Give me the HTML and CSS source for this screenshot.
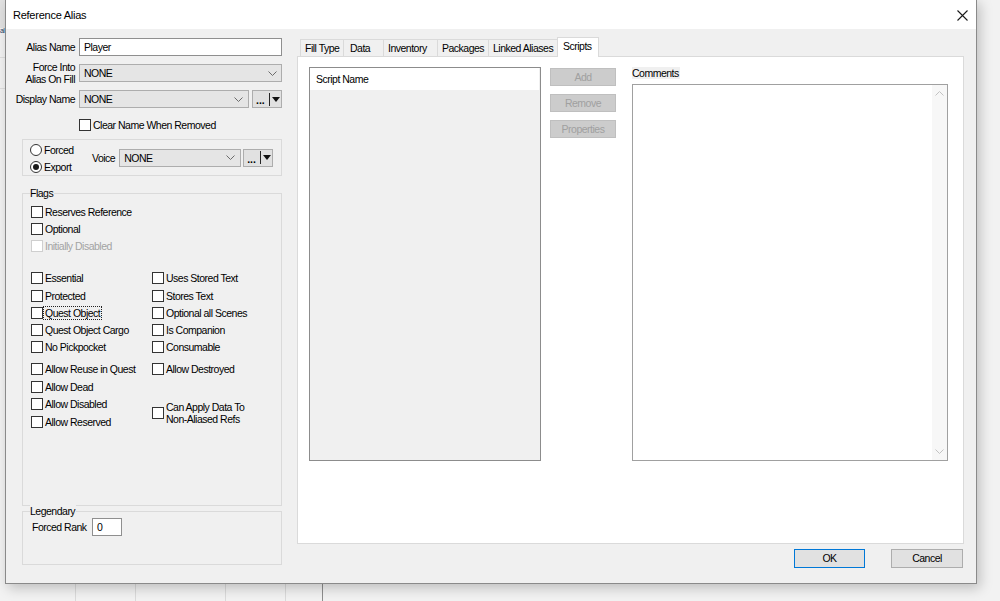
FILE: index.html
```html
<!DOCTYPE html>
<html>
<head>
<meta charset="utf-8">
<title>Reference Alias</title>
<link rel="stylesheet" href="styles.css">
</head>
<body>
<div class="desktop">
  <div class="bg-corner"></div>
  <span class="bg-text">al</span>
  <div class="bg-hline h1"></div>
  <div class="bg-hline h2"></div>
  <div class="bg-vline v1"></div>
  <div class="bg-vline v2"></div>
  <div class="bg-vline v3"></div>
  <div class="bg-vline v4"></div>
  <div class="bg-vline v5"></div>

  <div class="window">
    <div class="titlebar">
      <span class="title">Reference Alias</span>
      <svg class="close" width="11" height="11" viewBox="0 0 11 11"><path d="M0.5 0.5 L10.5 10.5 M10.5 0.5 L0.5 10.5" stroke="#1a1a1a" stroke-width="1.1" fill="none"/></svg>
    </div>
    <div class="client">
      <div class="left">
        <div class="frow r-alias">
          <span class="lbl">Alias Name</span>
          <div class="textbox w-alias">Player</div>
        </div>
        <div class="frow r-next">
          <span class="lbl two">Force Into<br>Alias On Fill</span>
          <div class="combo w-force"><span>NONE</span><svg class="chev" width="9" height="5" viewBox="0 0 9 5"><path d="M0.5 0.5 L4.5 4.5 L8.5 0.5" stroke="#6b6b6b" fill="none"/></svg></div>
        </div>
        <div class="frow r-next">
          <span class="lbl">Display Name</span>
          <div class="combo w-display"><span>NONE</span><svg class="chev" width="9" height="5" viewBox="0 0 9 5"><path d="M0.5 0.5 L4.5 4.5 L8.5 0.5" stroke="#6b6b6b" fill="none"/></svg></div>
          <div class="dots w-dots1"><span class="dd">...</span><span class="sep"></span><svg width="8" height="5" viewBox="0 0 8 5"><path d="M0 0 H8 L4 5 Z" fill="#111"/></svg></div>
        </div>
        <div class="cbrow r-clear"><span class="cb"></span><span>Clear Name When Removed</span></div>

        <div class="group g-voice">
          <div class="radios">
            <div class="rrow"><span class="radio"></span><span>Forced</span></div>
            <div class="rrow"><span class="radio on"></span><span>Export</span></div>
          </div>
          <span class="voice-lbl">Voice</span>
          <div class="combo w-voice"><span>NONE</span><svg class="chev" width="9" height="5" viewBox="0 0 9 5"><path d="M0.5 0.5 L4.5 4.5 L8.5 0.5" stroke="#6b6b6b" fill="none"/></svg></div>
          <div class="dots w-dots2"><span class="dd">...</span><span class="sep"></span><svg width="8" height="5" viewBox="0 0 8 5"><path d="M0 0 H8 L4 5 Z" fill="#111"/></svg></div>
        </div>

        <div class="group g-flags">
          <span class="legend">Flags</span>
          <div class="fcol c1">
            <div class="cbrow"><span class="cb"></span><span>Reserves Reference</span></div>
            <div class="cbrow"><span class="cb"></span><span>Optional</span></div>
            <div class="cbrow off"><span class="cb"></span><span>Initially Disabled</span></div>
            <div class="sp15"></div>
            <div class="cbrow h18"><span class="cb"></span><span>Essential</span></div>
            <div class="cbrow"><span class="cb"></span><span>Protected</span></div>
            <div class="cbrow"><span class="cb"></span><span class="focus">Quest Object</span></div>
            <div class="cbrow"><span class="cb"></span><span>Quest Object Cargo</span></div>
            <div class="cbrow h18"><span class="cb"></span><span>No Pickpocket</span></div>
            <div class="sp4"></div>
            <div class="cbrow h18"><span class="cb"></span><span>Allow Reuse in Quest</span></div>
            <div class="cbrow"><span class="cb"></span><span>Allow Dead</span></div>
            <div class="cbrow h18"><span class="cb"></span><span>Allow Disabled</span></div>
            <div class="cbrow"><span class="cb"></span><span>Allow Reserved</span></div>
          </div>
          <div class="fcol c2">
            <div class="sp66"></div>
            <div class="cbrow h18"><span class="cb"></span><span>Uses Stored Text</span></div>
            <div class="cbrow"><span class="cb"></span><span>Stores Text</span></div>
            <div class="cbrow"><span class="cb"></span><span>Optional all Scenes</span></div>
            <div class="cbrow"><span class="cb"></span><span>Is Companion</span></div>
            <div class="cbrow h18"><span class="cb"></span><span>Consumable</span></div>
            <div class="sp4"></div>
            <div class="cbrow h18"><span class="cb"></span><span>Allow Destroyed</span></div>
            <div class="sp17"></div>
            <div class="cbrow two"><span class="cb"></span><span>Can Apply Data To<br>Non-Aliased Refs</span></div>
          </div>
        </div>

        <div class="group g-legend">
          <span class="legend">Legendary</span>
          <div class="frow r-rank">
            <span class="rank-lbl">Forced Rank</span>
            <div class="textbox w-rank">0</div>
          </div>
        </div>
      </div>

      <div class="right">
        <div class="tabstrip">
          <div class="tab t1">Fill Type</div>
          <div class="tab t2">Data</div>
          <div class="tab t3">Inventory</div>
          <div class="tab t4">Packages</div>
          <div class="tab t5">Linked Aliases</div>
          <div class="tab t6 on">Scripts</div>
        </div>
        <div class="panel">
          <div class="list">
            <div class="lhead">Script Name</div>
          </div>
          <div class="btns">
            <div class="dbtn">Add</div>
            <div class="dbtn">Remove</div>
            <div class="dbtn">Properties</div>
          </div>
          <div class="comments">
            <span class="c-lbl">Comments</span>
            <div class="c-area">
              <div class="sbar">
                <svg width="9" height="5" viewBox="0 0 9 5"><path d="M0.5 4.5 L4.5 0.5 L8.5 4.5" stroke="#c2c2c2" fill="none"/></svg>
                <svg width="9" height="5" viewBox="0 0 9 5"><path d="M0.5 0.5 L4.5 4.5 L8.5 0.5" stroke="#c2c2c2" fill="none"/></svg>
              </div>
            </div>
          </div>
        </div>
        <div class="footer">
          <div class="btn ok">OK</div>
          <div class="btn cancel">Cancel</div>
        </div>
      </div>
    </div>
  </div>
</div>
</body>
</html>
```

FILE: styles.css
```css
* { box-sizing: border-box; }
html, body { margin: 0; padding: 0; }
body {
  width: 1000px;
  height: 601px;
  overflow: hidden;
  font-family: "Liberation Sans", Arial, sans-serif;
  font-size: 10.5px;
  letter-spacing: -0.5px;
  color: #000;
  background: #f2f2f2;
}

/* desktop background (other app behind the dialog) */
.desktop { position: relative; width: 1000px; height: 601px; background: #f2f2f2; }
.bg-corner { position: absolute; left: 0; top: 0; width: 6px; height: 28px; background: #e2e2e2; }
.bg-text { position: absolute; left: 0; top: 27px; font-size: 7px; letter-spacing: -0.6px; line-height: 8px; color: #1f3d6b; }
.bg-hline { position: absolute; left: 0; width: 6px; height: 1px; background: #dedede; }
.bg-hline.h1 { top: 57px; }
.bg-hline.h2 { top: 88px; }
.bg-vline { position: absolute; top: 584px; width: 1px; height: 17px; background: #dadada; }
.bg-vline.v1 { left: 75px; }
.bg-vline.v2 { left: 135px; }
.bg-vline.v3 { left: 225px; }
.bg-vline.v4 { left: 285px; }
.bg-vline.v5 { left: 322px; background: #8e8e8e; }

/* window */
.window {
  position: absolute;
  left: 5px;
  top: -1px;
  width: 972px;
  height: 585px;
  border: 1px solid #8a8a8a;
  background: #f0f0f0;
  box-shadow: 3px 4px 12px rgba(0, 0, 0, 0.22);
  display: flex;
  flex-direction: column;
}
.titlebar {
  flex: none;
  height: 29px;
  background: #fff;
  display: flex;
  align-items: center;
  padding-left: 7px;
  padding-right: 8px;
}
.title { font-size: 11px; letter-spacing: -0.25px; padding-top: 1px; }
.close { margin-left: auto; margin-top: 1px; }

.client { flex: 1; display: flex; }

/* left column */
.left { width: 276px; flex: none; display: flex; flex-direction: column; }
.frow { display: flex; align-items: center; height: 18px; }
.r-alias { margin-top: 9px; }
.r-next { margin-top: 8px; }
.lbl { width: 69px; flex: none; text-align: right; margin-right: 4px; white-space: nowrap; }
.lbl.two { line-height: 12px; }

.textbox {
  height: 18px;
  background: #fff;
  border: 1px solid #8f8f8f;
  padding-left: 4px;
  line-height: 16px;
}
.w-alias { width: 203px; }

.combo {
  height: 18px;
  background: #e5e5e5;
  border: 1px solid #adadad;
  display: flex;
  align-items: center;
  justify-content: space-between;
  padding-left: 4px;
  padding-right: 4px;
}
.w-force { width: 203px; }
.w-display { width: 170px; padding-right: 5px; }
.w-voice { width: 122px; padding-right: 5px; }

.dots {
  height: 18px;
  background: #e1e1e1;
  border: 1px solid #adadad;
  display: flex;
  align-items: center;
  padding-left: 3px;
}
.dots .dd { font-weight: bold; letter-spacing: 0; line-height: 10px; margin-top: 2px; }
.dots .sep { width: 1px; height: 13px; background: #262626; margin: 0 2px 0 4px; }
.w-dots1 { width: 30px; margin-left: 3px; }
.w-dots2 { width: 30px; margin-left: 2px; }

.cbrow { display: flex; align-items: center; height: 17px; white-space: nowrap; }
.cbrow.h18 { height: 18px; }
.cbrow.two { height: 36px; line-height: 12px; }
.cb {
  flex: none;
  width: 12px;
  height: 12px;
  border: 1px solid #333;
  background: #fff;
  margin-right: 2px;
}
.cbrow.off { color: #a3a3a3; }
.cbrow.off .cb { border-color: #cfcfcf; }
.focus { outline: 1px dotted #222; line-height: 12px; padding: 0 1px; margin-left: -1px; }
.r-clear { margin-top: 10px; height: 13px; margin-left: 73px; }

/* group boxes */
.group {
  position: relative;
  margin-left: 16px;
  width: 260px;
  border: 1px solid #dadada;
}
.legend {
  position: absolute;
  top: -7px;
  left: 7px;
  line-height: 13px;
  background: #f0f0f0;
  padding: 0 1px 0 0;
}
.g-voice { margin-top: 8px; height: 37px; display: flex; align-items: center; padding-left: 7px; }
.radios { width: 62px; flex: none; margin-top: 2px; }
.rrow { display: flex; align-items: center; height: 17px; }
.radio {
  width: 12px;
  height: 12px;
  border: 1px solid #333;
  border-radius: 50%;
  background: #fff;
  margin-right: 2px;
  display: flex;
  align-items: center;
  justify-content: center;
}
.radio.on::after {
  content: "";
  width: 6px;
  height: 6px;
  border-radius: 50%;
  background: #1a1a1a;
}
.voice-lbl { margin-right: 4px; }

.g-flags { margin-top: 17px; height: 313px; display: flex; padding: 9px 0 0 8px; }
.fcol { display: flex; flex-direction: column; }
.c1 { width: 121px; }
.sp15 { height: 15px; }
.sp4 { height: 4px; }
.sp17 { height: 17px; }
.sp66 { height: 66px; }

.g-legend { margin-top: 5px; height: 54px; padding: 6px 0 0 9px; }
.rank-lbl { width: 60px; flex: none; }
.w-rank { width: 30px; }

/* right column */
.right { width: 667px; margin-left: 15px; flex: none; display: flex; flex-direction: column; }
.tabstrip { height: 19px; margin-top: 8px; display: flex; align-items: flex-end; padding-left: 3px; }
.tab {
  height: 17px;
  border: 1px solid #dadada;
  border-bottom: none;
  background: #f0f0f0;
  padding-left: 4px;
  line-height: 16px;
  white-space: nowrap;
  margin-left: -1px;
}
.tab.t1 { width: 44px; margin-left: 0; }
.tab.t2 { width: 41px; padding-left: 6px; }
.tab.t3 { width: 55px; }
.tab.t4 { width: 52px; }
.tab.t5 { width: 70px; }
.tab.t6 { width: 42px; padding-left: 5px; }
.tab.on {
  height: 20px;
  background: #fff;
  margin-bottom: -1px;
  position: relative;
  z-index: 1;
  line-height: 17px;
}

.panel {
  height: 488px;
  border: 1px solid #dadada;
  background: #fff;
  display: flex;
  padding: 10px 0 0 11px;
}
.list {
  width: 232px;
  height: 394px;
  border: 1px solid #8c8c8c;
  background: #f0f0f0;
  flex: none;
}
.lhead { height: 22px; background: #fff; margin-right: 1px; padding-left: 6px; line-height: 22px; }
.btns { width: 66px; margin-left: 9px; padding-top: 1px; display: flex; flex-direction: column; gap: 8px; flex: none; }
.dbtn {
  height: 18px;
  background: #cccccc;
  border: 1px solid #bfbfbf;
  color: #a0a0a0;
  text-align: center;
  line-height: 16px;
}
.comments { width: 316px; margin-left: 16px; display: flex; flex-direction: column; flex: none; }
.c-lbl { align-self: flex-start; background: #f0f0f0; line-height: 12px; height: 12px; padding-right: 1px; }
.c-area {
  margin-top: 5px;
  height: 377px;
  border: 1px solid #a0a0a0;
  background: #fff;
  display: flex;
  justify-content: flex-end;
}
.sbar {
  width: 15px;
  background: #f7f7f7;
  display: flex;
  flex-direction: column;
  justify-content: space-between;
  align-items: center;
  padding: 6px 0 6px;
}

.footer { display: flex; justify-content: flex-end; margin-top: 5px; gap: 26px; padding-right: 1px; }
.btn {
  height: 19px;
  background: #e1e1e1;
  border: 1px solid #adadad;
  text-align: center;
  line-height: 17px;
}
.btn.ok { width: 71px; border-color: #0078d7; }
.btn.cancel { width: 72px; }
```
